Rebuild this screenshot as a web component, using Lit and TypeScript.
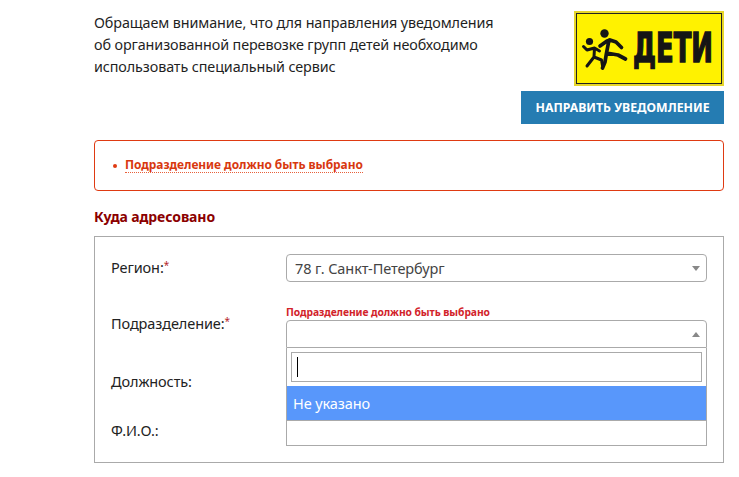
import { LitElement, html, css } from "lit";
import { customElement } from "lit/decorators.js";

@customElement("app-root")
export class AppRoot extends LitElement {
  static styles = css`
    :host { display: block; width: 739px; height: 477px; overflow: hidden; background: #fff; font-family: "Noto Sans", "Open Sans", sans-serif; color: #222; }
    .page { width: 630px; margin-left: 94px; display: flex; flex-direction: column; }
    .top { display: flex; justify-content: space-between; height: 124px; }
    .notice { margin: 12px 0 0; font-size: 14.35px; line-height: 22px; color: #1f1f1f; letter-spacing: -0.1px; width: 410px; }
    .side { display: flex; flex-direction: column; align-items: flex-end; width: 203px; }
    .logo { display: block; margin: 11px 0 0 0; }
    .send { margin-top: 5px; width: 203px; height: 33px; background: #257cb2; color: #fff; border: 0; font: bold 12.25px/33px "Noto Sans", sans-serif; padding: 0; text-align: center; }
    .alert { margin-top: 16px; height: 51px; border: 1px solid #df3a12; border-radius: 4px; display: flex; align-items: center; padding-left: 18px; box-sizing: border-box; width: 630px; }
    .dot { width: 4px; height: 4px; border-radius: 50%; background: #df3a12; margin-right: 8px; }
    .msg { color: #d8380f; font-weight: 700; font-size: 11.95px; line-height: 14px; border-bottom: 1px dotted #e8603a; letter-spacing: -0.05px; }
    h3 { margin: 17px 0 0; font-size: 14px; line-height: 18px; font-weight: 700; color: #8b0000; letter-spacing: -0.1px; }
    .box { margin-top: 10px; border: 1px solid #aaa; height: 227px; width: 630px; position: relative; box-sizing: border-box; display: grid; grid-template-columns: 191px 421px; grid-template-rows: 60px 55px 51px 50px; }
    .lbl { font-size: 14.5px; color: #222; padding-left: 16px; letter-spacing: -0.1px; line-height: 20px; }
    .lbl sup { color: #b5262a; font-size: 10px; line-height: 0; vertical-align: 4px; }
    .l1 { padding-top: 20px; }
    .l2 { padding-top: 16px; }
    .l3 { padding-top: 19px; }
    .l4 { padding-top: 17px; }
    .cell { position: relative; }
    .select { position: relative; height: 28px; border: 1px solid #aaa; border-radius: 4px; font-size: 14.5px; line-height: 27px; color: #444; padding-left: 8px; box-sizing: border-box; width: 421px; letter-spacing: -0.1px; }
    .c1 .select { margin-top: 17px; }
    .arrow { position: absolute; right: 6px; top: 11px; width: 0; height: 0; border-left: 4px solid transparent; border-right: 4px solid transparent; border-top: 5px solid #888; }
    .up { border-top: 0; border-bottom: 5px solid #888; }
    .err { font-size: 10.3px; font-weight: 700; color: #d2232a; line-height: 12px; padding-top: 9px; height: 14px; letter-spacing: -0.08px; white-space: nowrap; }
    .open { border-radius: 4px 4px 0 0; }
    .drop { position: absolute; left: 0; top: 51px; width: 421px; border: 1px solid #aaa; border-top: 0; box-sizing: border-box; background: #fff; z-index: 2; }
    .search { margin: 4px 4px 0; height: 30px; border: 1px solid #aaa; position: relative; box-sizing: border-box; }
    .caret { position: absolute; left: 5px; top: 4px; width: 1px; height: 20px; background: #000; }
    .opt { margin-top: 4px; height: 34px; background: #5897fb; color: #fff; font-size: 14.5px; line-height: 34px; padding-left: 6px; letter-spacing: -0.1px; }
    .input { height: 28px; margin-top: 15px; width: 421px; border: 1px solid #aaa; box-sizing: border-box; }
  `;

  render() {
    return html`
      <div class="page">
        <div class="top">
          <p class="notice">Обращаем внимание, что для направления уведомления об организованной перевозке групп детей необходимо использовать специальный сервис</p>
          <div class="side">
            <svg class="logo" width="150" height="75" viewBox="0 0 150 75" role="img" aria-label="ДЕТИ">
              <rect width="150" height="75" fill="#e6d62c"/>
              <rect x="2" y="2" width="146" height="71" fill="#222"/>
              <rect x="3" y="3" width="144" height="69" fill="#fff200"/>
              <g fill="none" stroke="#151515" stroke-linecap="round" stroke-linejoin="round">
                <circle cx="15.5" cy="30.5" r="3.6" fill="#151515" stroke="none"/>
                <path d="M20.5 37 L20 46 L13 55 M9.5 35.5 L13 39 L20.5 37 L25.5 40 M20 46 L27.5 49 L28.5 54.5" stroke-width="3"/>
                <circle cx="30.5" cy="22.5" r="4.2" fill="#151515" stroke="none"/>
                <path d="M35 29 L32.5 42 L44 44 L51.5 48 M32.5 42 L31 51 L28.5 57 M33 30 L26 35 M36 29 L42 31 L47.5 36.5" stroke-width="3.7"/>
              </g>
              <g transform="scale(1 1.45)">
                <text x="59" y="35.5" font-family="'DejaVu Sans Condensed', 'Liberation Sans', sans-serif" font-weight="700" font-size="28" textLength="80" lengthAdjust="spacingAndGlyphs" fill="#151515" stroke="#151515" stroke-width="1">ДЕТИ</text>
              </g>
            </svg>
            <button class="send">НАПРАВИТЬ УВЕДОМЛЕНИЕ</button>
          </div>
        </div>
        <div class="alert"><span class="dot"></span><span class="msg">Подразделение должно быть выбрано</span></div>
        <h3>Куда адресовано</h3>
        <div class="box">
          <div class="lbl l1">Регион:<sup>*</sup></div>
          <div class="cell c1"><div class="select">78 г. Санкт-Петербург<span class="arrow"></span></div></div>
          <div class="lbl l2">Подразделение:<sup>*</sup></div>
          <div class="cell">
            <div class="err">Подразделение должно быть выбрано</div>
            <div class="select open"><span class="arrow up"></span></div>
            <div class="drop">
              <div class="search"><span class="caret"></span></div>
              <div class="opt">Не указано</div>
            </div>
          </div>
          <div class="lbl l3">Должность:</div>
          <div class="cell"></div>
          <div class="lbl l4">Ф.И.О.:</div>
          <div class="cell"><div class="input"></div></div>
        </div>
      </div>
    `;
  }
}
